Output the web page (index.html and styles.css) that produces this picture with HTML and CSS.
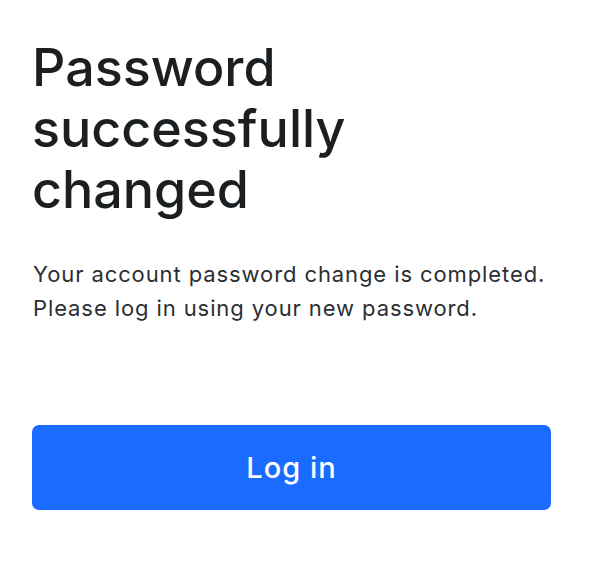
FILE: index.html
```html
<!DOCTYPE html>
<html lang="en">
<head>
    <meta charset="UTF-8">
    <title>Password changed</title>
    <link rel="stylesheet" href="styles.css">
</head>
<body>

<div class="container">
    <div class="done-card">
        <h1>Password successfully changed</h1>
        <p class="message">Your account password change is completed.<br>Please log in using your new password.</p>
        <button type="button" class="login-btn">Log in</button>
    </div>
</div>

</body>
</html>
```

FILE: styles.css
```css
body {
    margin: 0;
    background-color: #fff;
    font-family: 'Inter', 'Noto Sans', sans-serif;
}

.container {
    padding: 37px 39px 0 32px;
}

.done-card h1 {
    margin: 0;
    font-size: 52px;
    line-height: 61px;
    font-weight: 500;
    color: #1b1f22;
    width: 340px;
}

.message {
    margin: 37px 0 0 1px;
    font-size: 22px;
    line-height: 34px;
    letter-spacing: 0.9px;
    color: #2b2f33;
    white-space: nowrap;
}

.login-btn {
    display: block;
    width: 100%;
    height: 85px;
    margin-top: 100px;
    border: none;
    border-radius: 7px;
    background-color: #1a6bff;
    color: #fff;
    font-family: inherit;
    font-size: 29px;
    font-weight: 500;
    letter-spacing: 1px;
    cursor: pointer;
}
```
